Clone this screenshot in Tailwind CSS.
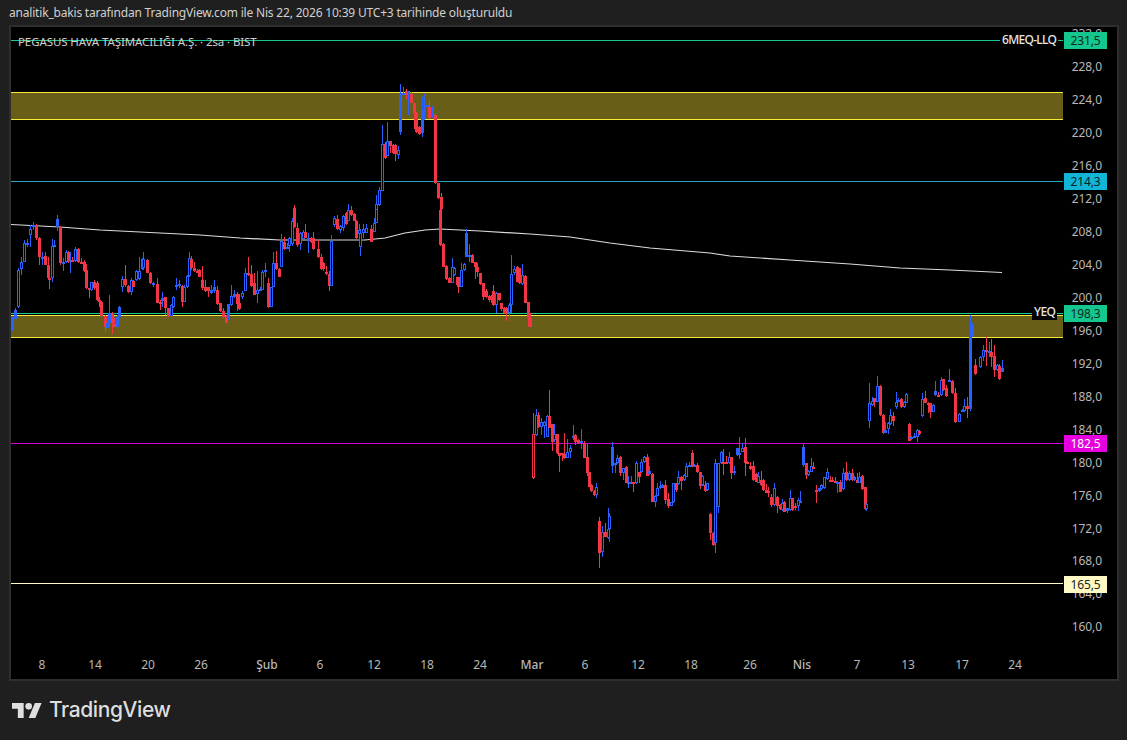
<!DOCTYPE html>
<html lang="tr">
<head>
<meta charset="utf-8">
<title>PEGASUS</title>
<script src="https://cdn.jsdelivr.net/npm/@tailwindcss/browser@4"></script>
</head>
<body class="w-[1127px] h-[740px] overflow-hidden bg-[#1f1f1f] font-['Noto_Sans','Open_Sans',sans-serif]">
<div class="h-[25px] pl-[9px] pt-[-1px] flex items-center text-[12px] text-[#d0d0d0] whitespace-nowrap tracking-[-0.19px]">analitik_bakis tarafından TradingView.com ile Nis 22, 2026 10:39 UTC+3 tarihinde oluşturuldu</div>
<div class="ml-[9px] w-[1110px] h-[656px] border-2 border-[#2e2e2e] bg-black flex flex-col">
  <div class="flex h-[623px]">
    <div class="relative w-[1052px] shrink-0">
      <svg id="chart" class="absolute left-0 top-0 overflow-visible" width="1106" height="652" viewBox="11 27 1106 652" fill="none">
        <rect x="11" y="92" width="1052" height="27.5" fill="#695e18"/>
        <rect x="11" y="315" width="1052" height="22.5" fill="#695e18"/>
        <path d="M11 92.5H1063M11 119.5H1063M11 315.5H1063M11 337.5H1063" stroke="#f5e93c"/>
        <path d="M11 40.5H1063M11 313.5H1063" stroke="#17c98f"/>
        <path d="M11 181.5H1063" stroke="#23a6bb"/>
        <path d="M11 443.5H1063" stroke="#d000d0"/>
        <path d="M11 583.5H1063" stroke="#fff9c4"/>
        <polyline stroke="#dcdcdc" stroke-width="1.2" points="11,224.5 60,227 100,230 150,232.5 200,235 240,238 280,240 330,240 365,240 385,238 405,233 425,230 440,229 480,231 530,234 570,237 610,243 650,248 710,253 730,256 790,260 850,264 900,268 950,270 1002,272.5"/>
      </svg>
      <div class="absolute left-[7px] top-[7px] text-[11.5px] leading-[16px] text-[#d0d0d0] whitespace-nowrap tracking-[-0.1px]">PEGASUS HAVA TAŞIMACILIĞI A.Ş. · 2sa · BIST</div>
      <div class="absolute left-[989px] top-[5px] px-[2px] bg-black text-[12px] leading-[16px] font-medium text-[#e8e8e8] tracking-[-0.7px]">6MEQ-LLQ</div>
      <div class="absolute left-[1021px] top-[277px] px-[2px] bg-black text-[12px] leading-[16px] font-medium text-[#e8e8e8] tracking-[-0.6px]">YEQ</div>
    </div>
    <div class="relative flex-1 flex flex-col items-end pr-[15px] text-[12px] text-[#b8b8b8] tracking-[-0.1px]">
      <div class="h-[32.94px] flex items-center shrink-0 mt-[-9px]">232,0</div>
      <div class="h-[32.94px] flex items-center shrink-0">228,0</div>
      <div class="h-[32.94px] flex items-center shrink-0">224,0</div>
      <div class="h-[32.94px] flex items-center shrink-0">220,0</div>
      <div class="h-[32.94px] flex items-center shrink-0">216,0</div>
      <div class="h-[32.94px] flex items-center shrink-0">212,0</div>
      <div class="h-[32.94px] flex items-center shrink-0">208,0</div>
      <div class="h-[32.94px] flex items-center shrink-0">204,0</div>
      <div class="h-[32.94px] flex items-center shrink-0">200,0</div>
      <div class="h-[32.94px] flex items-center shrink-0">196,0</div>
      <div class="h-[32.94px] flex items-center shrink-0">192,0</div>
      <div class="h-[32.94px] flex items-center shrink-0">188,0</div>
      <div class="h-[32.94px] flex items-center shrink-0">184,0</div>
      <div class="h-[32.94px] flex items-center shrink-0">180,0</div>
      <div class="h-[32.94px] flex items-center shrink-0">176,0</div>
      <div class="h-[32.94px] flex items-center shrink-0">172,0</div>
      <div class="h-[32.94px] flex items-center shrink-0">168,0</div>
      <div class="h-[32.94px] flex items-center shrink-0">164,0</div>
      <div class="h-[32.94px] flex items-center shrink-0">160,0</div>
      <div class="absolute left-[1px] top-[5px] w-[43px] h-[17px] bg-[#14c78f] text-[#0c2a20] flex items-center justify-center">231,5</div>
      <div class="absolute left-[1px] top-[146px] w-[43px] h-[17px] bg-[#12b5d6] text-[#06222a] flex items-center justify-center">214,3</div>
      <div class="absolute left-[1px] top-[278px] w-[43px] h-[17px] bg-[#14c78f] text-[#0c2a20] flex items-center justify-center">198,3</div>
      <div class="absolute left-[1px] top-[408px] w-[43px] h-[17px] bg-[#e600e0] text-white flex items-center justify-center">182,5</div>
      <div class="absolute left-[1px] top-[549px] w-[43px] h-[17px] bg-[#fff9c4] text-[#222] flex items-center justify-center">165,5</div>
    </div>
  </div>
  <div class="relative flex-1 text-[12px] text-[#b8b8b8]">
    <span class="absolute left-[31px] top-[6px] -translate-x-1/2">8</span>
    <span class="absolute left-[84px] top-[6px] -translate-x-1/2">14</span>
    <span class="absolute left-[137px] top-[6px] -translate-x-1/2">20</span>
    <span class="absolute left-[190px] top-[6px] -translate-x-1/2">26</span>
    <span class="absolute left-[256px] top-[6px] -translate-x-1/2 font-medium">Şub</span>
    <span class="absolute left-[309px] top-[6px] -translate-x-1/2">6</span>
    <span class="absolute left-[363px] top-[6px] -translate-x-1/2">12</span>
    <span class="absolute left-[416px] top-[6px] -translate-x-1/2">18</span>
    <span class="absolute left-[469px] top-[6px] -translate-x-1/2">24</span>
    <span class="absolute left-[521px] top-[6px] -translate-x-1/2 font-medium">Mar</span>
    <span class="absolute left-[574px] top-[6px] -translate-x-1/2">6</span>
    <span class="absolute left-[627px] top-[6px] -translate-x-1/2">12</span>
    <span class="absolute left-[680px] top-[6px] -translate-x-1/2">18</span>
    <span class="absolute left-[739px] top-[6px] -translate-x-1/2">26</span>
    <span class="absolute left-[791px] top-[6px] -translate-x-1/2 font-medium">Nis</span>
    <span class="absolute left-[846px] top-[6px] -translate-x-1/2">7</span>
    <span class="absolute left-[897px] top-[6px] -translate-x-1/2">13</span>
    <span class="absolute left-[951px] top-[6px] -translate-x-1/2">17</span>
    <span class="absolute left-[1004px] top-[6px] -translate-x-1/2">24</span>
  </div>
</div>
<div class="flex items-center gap-[7px] pl-[12px] pt-[16px]">
  <svg width="30" height="15" viewBox="0 4 36 18" fill="#dedede"><path d="M14 22H7V11H0V4h14v18zM28 22h-8l7.5-18h8L28 22z"/><circle cx="20" cy="8" r="4"/></svg>
  <span class="text-[21px] leading-[26px] font-medium text-[#dedede] font-['Inter',sans-serif] tracking-[-0.4px]">TradingView</span>
</div>
<script>
var segs=[
[0,210,"b36,325,362,320,362 b45,300,328,295,330 b54,180,292,175,295 b63,155,178,142,195 b72,98,155,90,155 b81,98,100,88,110 b90,58,76,45,110 b99,45,50,37,60 r108,45,85,43,90 r117,85,140,80,165 b126,140,146,125,165 r135,138,165,125,165 r144,165,203,140,205 r147,203,204,185,237 b155,108,203,88,215 b162,105,107,90,108 B171,28,50,15,62 r180,50,160,48,165 b189,155,160,145,183 b198,125,155,120,160 r203,125,155,122,158 b209,150,152,125,188 r216,150,152,140,156 b225,118,152,112,155 r234,118,155,115,158 r243,155,158,143,162 r252,155,183,150,187 r258,180,235,162,238 r267,235,240,235,263 b272,217,240,215,242 r282,217,235,210,240 r291,220,270,212,272 r298,270,275,262,290 r304,275,318,272,320 r314,318,350,315,365 b320,340,355,335,358 b328,308,340,255,350 r335,308,340,305,372 r343,342,350,325,350 b352,322,350,315,353 b358,290,322,288,325 b367,208,230,198,245 r376,208,225,165,230 r385,228,246,225,250 b392,210,245,205,255 r400,212,230,210,232 b408,182,210,180,212 b416,182,207,140,210 b425,148,178,145,180 b430,148,175,125,180 r440,150,188,148,190 r450,188,220,186,222 b459,220,222,215,232 r472,222,278,205,280 r480,275,277,270,300 b487,265,272,245,290 r495,262,295,262,315 r503,295,318,295,320 b512,285,318,282,320 b518,262,290,258,295 b528,225,227,205,240 b536,222,224,210,235 r545,228,275,225,290 b552,232,275,225,275 b560,198,232,196,235 b566,145,198,125,200 r574,148,175,138,180 r582,175,182,155,185 r590,182,185,178,188 r598,180,200,178,202"],
[200,200,"r7,240,265,198,270 r16,260,272,240,275 r25,262,272,260,290 b34,270,280,255,282 B43,262,272,240,280 r52,270,312,258,315 r61,310,332,308,335 r70,332,352,325,355 r79,348,368,345,370 b85,312,358,312,360 b94,288,315,255,318 b103,282,290,270,295 r110,282,312,275,332 r118,310,326,282,330 b127,280,290,272,298 b136,220,272,205,272 r145,218,225,170,228 r154,222,258,195,262 r163,248,285,218,285 b172,270,282,212,308 b181,268,270,262,272 b187,215,270,210,270 B196,210,214,190,230 r205,248,322,235,325 b212,262,322,260,322 b220,188,260,155,262 r229,188,208,152,210 r237,208,230,205,232 b244,122,200,102,200 r253,125,148,110,150 b262,140,145,128,148 b268,115,138,112,155 b277,62,132,55,138 r283,25,80,15,85 r292,85,135,68,140 b301,98,133,95,150 b308,95,118,90,120 r316,96,113,72,115 b325,115,118,100,158 r334,115,125,110,128 r340,115,148,96,150 r355,148,170,120,175 r364,170,208,162,210 r370,190,208,185,212 r379,215,222,198,225 r388,222,258,212,272 b394,122,257,105,258 b403,55,75,48,80 r412,58,88,45,90 b420,78,90,75,100 b428,48,85,45,92 r437,38,72,35,74 b443,30,62,12,62 r452,30,45,18,47 r461,42,62,38,64 r468,62,115,60,118 b476,90,102,72,105 b481,100,142,88,167 b490,88,100,72,115 b499,85,98,72,100 r514,88,125,75,127 b523,68,95,55,97 b529,12,68,8,70"],
[370,80,"b19,372,390,345,390 b28,330,375,320,378 b37,192,332,135,332 r44,192,235,185,238 b52,183,228,125,228 r61,183,198,183,218 r68,195,220,192,222 r76,195,222,192,243 b85,210,225,198,237 b91,42,155,12,165 b100,40,44,20,45 r108,32,45,28,58 b115,32,34,32,105 r124,42,68,35,70 r131,68,98,68,148 r139,98,155,95,158 r148,140,162,138,164 b155,90,160,52,170 b163,90,92,42,120 b172,75,80,70,82 r178,80,115,60,118 b187,80,112,78,114 r196,105,310,102,312 r204,310,355,310,358 r212,350,388,338,390"],
[430,220,"r31,-30,75,-32,77 r40,72,140,70,142 r49,138,178,136,180 r56,175,188,172,190 b65,140,188,115,188 b72,145,165,142,167 r80,172,195,170,198 r85,172,200,170,220 b94,150,200,128,202 b103,132,150,128,152 B109,40,110,28,110 b118,105,108,72,125 r127,105,128,102,130 r135,125,140,125,178 r142,140,155,128,170 r151,160,192,158,194 r158,190,230,188,240 r167,212,232,208,234 r176,228,240,225,245 r185,225,250,222,252 r190,212,255,195,258 b199,218,255,215,278 r206,220,240,218,242 r213,250,268,248,272 r222,265,280,262,282 r229,265,282,262,302 b238,255,280,250,302 b244,162,255,105,280 b253,148,160,138,165 r262,140,185,138,187 r268,145,190,143,192 b277,165,192,132,195 r285,168,248,165,250 r294,245,295,245,320 r301,295,322,278,322"],
[525,385,"R25,148,280,85,282 b32,90,150,72,152 r40,90,125,82,128 b49,110,125,98,150 b56,110,122,108,158 b65,92,155,90,155 r73,92,128,15,130 r80,118,170,116,198 b88,148,165,118,170 r97,148,205,146,207 r103,205,212,203,260 r112,205,207,203,228 r118,208,220,145,222 b127,202,218,162,218 b136,190,202,180,220 b144,152,154,120,165 r151,150,170,148,180 r160,165,175,163,177 b167,168,170,132,192 r176,175,218,168,218 r185,215,265,178,272 r192,262,305,260,307 r199,300,318,298,320 r208,318,330,316,332 b214,305,330,295,340 r223,408,505,395,548 b232,442,502,422,515 r241,442,455,415,457 b248,432,460,370,462 b253,394,432,385,470 B262,185,242,172,265 b271,235,237,233,265 b277,218,235,210,237 r286,216,263,214,272 b295,250,265,248,285 r302,245,293,243,295 b310,292,294,272,308 b319,292,294,272,298 r325,292,295,290,320 b334,235,295,228,297 r343,262,275,260,295 b349,232,262,222,264 b358,216,232,214,234 r367,216,272,208,274 b373,258,268,242,270 r382,267,350,265,352 b391,332,350,330,365 b397,310,332,295,334 b406,302,310,288,312 b412,300,308,298,310 r421,300,345,285,358 r430,342,362,325,368 b437,352,362,350,364 b445,295,352,293,354 r454,295,315,293,322 b460,275,298,258,300 r469,275,288,273,315 b478,270,286,268,288 b484,242,275,235,277 b493,240,245,232,247 r502,205,245,195,247 b508,240,245,238,247 r517,240,262,234,264 r526,262,302,260,312 b532,275,302,273,304 r540,300,318,298,320"],
[700,430,"b6,138,165,136,167 r15,165,183,152,186 b21,160,180,158,182 r30,252,310,250,330 r39,308,345,305,347 b46,100,338,88,368 b53,100,232,98,248 b62,65,100,63,102 r70,95,100,58,135 r79,95,98,78,102 b88,82,100,65,102 r94,82,128,80,148 b103,124,126,108,135 B112,55,75,53,77 b118,68,74,22,88 b127,55,65,40,67 r136,52,98,25,138 r142,95,98,93,100 r151,108,118,95,120 r160,108,150,92,152 r168,132,155,130,157 b175,138,158,125,160 r184,150,165,122,167 r190,150,180,148,182 r199,180,188,162,190 r205,182,190,170,200 r214,200,225,192,232 b223,175,225,160,227 r230,200,228,198,248 r239,225,238,223,240 b246,220,240,208,242 r253,215,245,213,247 b262,235,243,233,248 b271,205,240,180,242 r277,205,240,203,242 r286,228,232,220,240 b295,210,228,205,242 b301,212,214,183,216 B310,50,105,40,110 r318,100,135,98,147 b325,122,135,120,137 b334,108,125,85,127 r340,112,114,96,118 r349,180,182,165,218 b358,175,183,173,185 b364,165,178,163,180 b373,142,175,140,177 b382,125,148,113,150 r391,150,152,138,154 r397,150,152,140,154 r406,152,158,142,160 b412,155,157,153,190 r421,155,185,150,187 b430,130,177,113,179 r437,125,150,97,152 b446,128,150,122,152 r455,130,150,118,152 b461,140,150,138,152 r470,150,158,130,160 b476,140,158,125,160 r485,138,178,136,180 r494,172,237,170,239 b499,222,237,220,242"],
[860,310,"b28,280,332,220,355 b37,272,285,262,288 r43,265,275,263,290 b52,228,275,198,277 r61,228,315,225,317 r70,315,370,313,372 b76,360,368,335,370 b85,338,358,336,372 b90,315,342,298,344 r99,318,332,305,348 b108,275,290,247,298 b115,270,275,265,277 r124,268,292,265,294 b133,275,292,273,294 b139,252,278,250,280 r148,342,392,340,394 b154,380,388,378,390 b163,378,380,370,382 b172,360,380,358,395 r178,362,372,360,374 b187,268,318,250,320 r196,265,278,243,280 r205,278,280,276,308 r211,280,305,278,323 b220,285,305,283,307 B226,243,255,212,257 r235,255,258,245,262 b244,210,255,200,257 r250,208,240,206,242 r259,235,258,225,260 b268,210,212,178,214 r277,212,250,210,252 r285,248,335,235,338 b298,312,335,310,337 b307,300,302,298,304 b312,288,303,268,305 r322,288,298,262,323 b331,80,298,15,303 b336,42,78,40,80 r346,165,192,148,195 b360,140,172,138,174 b370,120,140,105,152 r379,120,122,82,168 b386,122,124,95,140 r394,125,142,87,172 r403,138,180,105,200 b410,165,180,163,182 r418,168,208,162,210 B427,175,185,150,187"]
];
var s="";
segs.forEach(function(g){g[2].split(" ").forEach(function(t){
  var k=t[0],v=t.slice(1).split(",").map(Number);
  var X=Math.round(g[0]+v[0]/3),Y=function(z){return Math.round(g[1]+z/3)};
  var top=Y(v[1]),bot=Y(v[2]),hi=Y(v[3]),lo=Y(v[4]);
  var col=(k=="r"||k=="R")?"#f23645":"#2962ff";
  s+='<path d="M'+(X+.5)+' '+hi+'V'+lo+'" stroke="'+col+'"/>';
  var h=Math.max(bot-top,2);
  if(k=="r"||k=="B"||h<4){s+='<rect x="'+(X-1)+'" y="'+top+'" width="3" height="'+h+'" fill="'+col+'"/>';}
  else{s+='<rect x="'+(X-.5)+'" y="'+(top+.5)+'" width="2" height="'+(h-1)+'" fill="#000" fill-opacity="'+(top<340&&bot>316||top<119&&bot>93?0:1)+'" stroke="'+col+'"/>';}
})});
document.getElementById("chart").insertAdjacentHTML("beforeend",s);
</script>
</body>
</html>
